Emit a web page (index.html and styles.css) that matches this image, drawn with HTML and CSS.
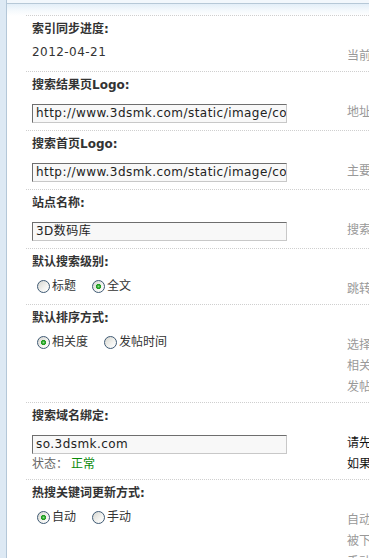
FILE: index.html
```html
<!DOCTYPE html>
<html lang="zh-CN">
<head>
<meta charset="utf-8">
<title>云搜索设置</title>
<link rel="stylesheet" href="styles.css">
</head>
<body>
<div class="page">
  <div class="rail"></div>
  <div class="main">
    <div class="topbar"></div>
    <div class="content">

      <div class="setting">
        <div class="label">索引同步进度:</div>
        <div class="row">
          <div class="ctl"><div class="value">2012-04-21</div></div>
          <div class="tips"><div class="tip">当前索引已同步到该日期</div></div>
        </div>
      </div>

      <div class="setting">
        <div class="label">搜索结果页Logo:</div>
        <div class="row">
          <div class="ctl"><div class="txt">http://www.3dsmk.com/static/image/common/logo_sc_s.png</div></div>
          <div class="tips"><div class="tip">地址以 http:// 开头，留空则使用默认Logo</div></div>
        </div>
      </div>

      <div class="setting">
        <div class="label">搜索首页Logo:</div>
        <div class="row">
          <div class="ctl"><div class="txt">http://www.3dsmk.com/static/image/common/logo_sc.png</div></div>
          <div class="tips"><div class="tip">主要用于搜索首页展示</div></div>
        </div>
      </div>

      <div class="setting">
        <div class="label">站点名称:</div>
        <div class="row">
          <div class="ctl"><div class="txt">3D数码库</div></div>
          <div class="tips"><div class="tip">搜索页面显示的站点名称</div></div>
        </div>
      </div>

      <div class="setting">
        <div class="label">默认搜索级别:</div>
        <div class="row">
          <div class="ctl">
            <div class="radios">
              <span class="opt"><span class="radio"></span>标题</span>
              <span class="opt"><span class="radio on"></span>全文</span>
            </div>
          </div>
          <div class="tips"><div class="tip">跳转到搜索页面时默认的搜索级别</div></div>
        </div>
      </div>

      <div class="setting">
        <div class="label">默认排序方式:</div>
        <div class="row">
          <div class="ctl">
            <div class="radios">
              <span class="opt"><span class="radio on"></span>相关度</span>
              <span class="opt"><span class="radio"></span>发帖时间</span>
            </div>
          </div>
          <div class="tips">
            <div class="tip">选择搜索结果的默认排序方式</div>
            <div class="tip">相关度：按照关键词匹配程度排序</div>
            <div class="tip">发帖时间：按照发帖时间倒序排列</div>
          </div>
        </div>
      </div>

      <div class="setting">
        <div class="label">搜索域名绑定:</div>
        <div class="row">
          <div class="ctl">
            <div class="txt">so.3dsmk.com</div>
            <div class="status">状态：<span class="ok">正常</span></div>
          </div>
          <div class="tips dark">
            <div class="tip">请先将该域名解析到云平台</div>
            <div class="tip">如果状态异常，请检查域名解析</div>
          </div>
        </div>
      </div>

      <div class="setting">
        <div class="label">热搜关键词更新方式:</div>
        <div class="row">
          <div class="ctl">
            <div class="radios">
              <span class="opt"><span class="radio on"></span>自动</span>
              <span class="opt"><span class="radio"></span>手动</span>
            </div>
          </div>
          <div class="tips">
            <div class="tip">自动：系统根据搜索热度自动更新</div>
            <div class="tip">被下线的关键词不会再次出现</div>
            <div class="tip">手动：由管理员设置热搜关键词</div>
          </div>
        </div>
      </div>

    </div>
  </div>
</div>
</body>
</html>
```

FILE: styles.css
```css
html, body {
  margin: 0;
  padding: 0;
  background: #fff;
  overflow: hidden;
}

body {
  font-family: "DejaVu Sans", "Noto Sans CJK SC", sans-serif;
  font-size: 12px;
  color: #333;
}

.page {
  display: flex;
  width: 369px;
  height: 558px;
  overflow: hidden;
}

.rail {
  flex: 0 0 6px;
  background: #dde9f4;
  border-right: 1px solid #b4c7d8;
}

.main {
  flex: 1 1 auto;
  min-width: 0;
  display: flex;
  flex-direction: column;
}

.topbar {
  flex: 0 0 3px;
  height: 3px;
  background: #f2f7fc;
  border-bottom: 1px solid #b6c8d7;
}

.content {
  flex: 1 1 auto;
  padding: 11px 0 0 19px;
  background: linear-gradient(#e3eef8 0, #f6fafd 7px, #fff 12px);
}

.setting {
  border-top: 1px dotted #cfcfcf;
  padding: 0 0 0 6px;
}

.label {
  margin-top: 6px;
  height: 15px;
  line-height: 15px;
  font-weight: bold;
  color: #333;
  white-space: nowrap;
}

.row {
  display: flex;
  align-items: flex-start;
  padding: 9px 0 4px;
}

.ctl {
  flex: 0 0 255px;
  width: 255px;
}

.value {
  height: 12px;
  line-height: 12px;
  letter-spacing: 0.45px;
  color: #333;
}

.txt {
  box-sizing: border-box;
  width: 255px;
  height: 19px;
  margin: 2px 0 3px;
  padding: 0 3px;
  line-height: 17px;
  letter-spacing: 0.45px;
  border: 1px solid;
  border-color: #6e6e6e #c8c8c8 #c8c8c8 #6e6e6e;
  background: #f8f8f8;
  color: #222;
  white-space: nowrap;
  overflow: hidden;
}

.status {
  height: 15px;
  line-height: 15px;
  color: #666;
}

.ok {
  margin-left: 3px;
  color: #0a8a0a;
}

.radios {
  display: flex;
  align-items: center;
  line-height: 14px;
  height: 14px;
  padding-left: 5px;
}

.opt {
  display: inline-flex;
  align-items: center;
  margin-right: 16px;
  color: #333;
}

.radio {
  display: inline-block;
  width: 11px;
  height: 11px;
  margin-right: 2px;
  border: 1px solid #3f5a74;
  border-radius: 50%;
  background: linear-gradient(135deg, #d6d6d0 0%, #f4f4f1 60%, #fff 100%);
}

.radio.on {
  background:
    radial-gradient(circle at 50% 50%, #8fdc8f 0, #27a427 1.6px, #1f9a1f 2.4px, rgba(31,154,31,0) 2.9px),
    linear-gradient(135deg, #d6d6d0 0%, #f4f4f1 60%, #fff 100%);
}

.tips {
  margin-left: 60px;
  color: #999;
  white-space: nowrap;
}

.tip {
  height: 21px;
  line-height: 21px;
}

.tips.dark {
  color: #111;
}
```
